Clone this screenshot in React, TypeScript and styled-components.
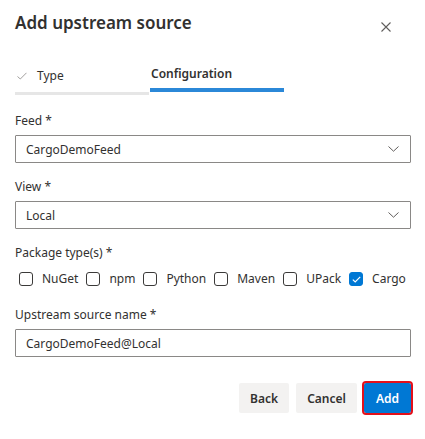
import React from "react";
import styled, { createGlobalStyle } from "styled-components";

const textColor = "#323130";
const accent = "#0078d4";

const GlobalStyle = createGlobalStyle`
  html, body {
    margin: 0;
    padding: 0;
    background: #ffffff;
  }
  body {
    font-family: "Noto Sans", "Open Sans", sans-serif;
    color: ${textColor};
  }
`;

const Dialog = styled.div`
  width: 425px;
  height: 439px;
  box-sizing: border-box;
  padding: 11px 14px 0 15px;
  display: flex;
  flex-direction: column;
`;

const Header = styled.div`
  display: flex;
  align-items: flex-start;
  justify-content: space-between;
`;

const Title = styled.h1`
  margin: 0;
  font-size: 17px;
  line-height: 24px;
  font-weight: 600;
  color: ${textColor};
`;

const CloseButton = styled.button`
  border: none;
  background: transparent;
  padding: 0;
  margin: 11px 20px 0 0;
  width: 10px;
  height: 10px;
  display: flex;
  cursor: pointer;
`;

const Stepper = styled.div`
  display: flex;
  gap: 1px;
  margin-top: 31px;
`;

const Step = styled.div<{ $active?: boolean }>`
  width: 134px;
  display: flex;
  flex-direction: column;
  padding-top: ${(p) => (p.$active ? 0 : 2)}px;
`;

const StepLabel = styled.div<{ $active?: boolean }>`
  display: flex;
  align-items: center;
  gap: 10px;
  height: 16px;
  padding-left: ${(p) => (p.$active ? 1 : 2)}px;
  font-size: 12px;
  line-height: 16px;
  font-weight: ${(p) => (p.$active ? 600 : 400)};
  color: ${textColor};
`;

const StepBar = styled.div<{ $active?: boolean }>`
  margin-top: ${(p) => (p.$active ? 6 : 8)}px;
  height: ${(p) => (p.$active ? 4 : 3)}px;
  background: ${(p) => (p.$active ? "#2b88d8" : "#e6e6e6")};
`;

const Form = styled.div`
  display: flex;
  flex-direction: column;
  margin-top: 18px;
`;

const Field = styled.div<{ $gap?: number }>`
  display: flex;
  flex-direction: column;
  margin-bottom: ${(p) => p.$gap ?? 16}px;
`;

const Label = styled.label`
  font-size: 12px;
  line-height: 16px;
  color: ${textColor};
  margin-bottom: 6px;
`;

const Box = styled.div`
  height: 28px;
  box-sizing: border-box;
  border: 1px solid #8a8886;
  border-radius: 1px;
  display: flex;
  align-items: center;
  padding: 0 11px 0 10px;
  font-size: 12px;
  color: ${textColor};
`;

const BoxText = styled.span`
  flex: 1;
`;

const CheckRow = styled.div`
  display: flex;
  align-items: center;
  gap: 8px;
  padding-left: 4px;
  margin-top: 4px;
`;

const CheckItem = styled.label`
  display: flex;
  align-items: center;
  gap: 9px;
  font-size: 12px;
  line-height: 16px;
  color: ${textColor};
`;

const CheckBox = styled.span<{ $checked?: boolean }>`
  width: 14px;
  height: 14px;
  box-sizing: border-box;
  border-radius: 3px;
  border: 1px solid ${(p) => (p.$checked ? accent : "#3b3a39")};
  background: ${(p) => (p.$checked ? accent : "#fff")};
  display: flex;
  align-items: center;
  justify-content: center;
`;

const Footer = styled.div`
  display: flex;
  justify-content: flex-end;
  gap: 7px;
  margin-top: 26px;
`;

const Button = styled.button<{ $primary?: boolean }>`
  height: 30px;
  padding: 0 ${(p) => (p.$primary ? 12 : 11)}px;
  border: none;
  border-radius: 2px;
  font-family: "Noto Sans", "Open Sans", sans-serif;
  font-size: 12px;
  font-weight: 600;
  background: ${(p) => (p.$primary ? accent : "#f3f2f1")};
  color: ${(p) => (p.$primary ? "#fff" : textColor)};
  outline: ${(p) => (p.$primary ? "2px solid #e3101a" : "none")};
  cursor: pointer;
`;

const Chevron = () => (
  <svg width="11" height="6" viewBox="0 0 11 6" fill="none">
    <path d="M0.5 0.5 L5.5 5.2 L10.5 0.5" stroke="#605e5c" strokeWidth="1" />
  </svg>
);

const packageTypes = [
  { name: "NuGet", checked: false },
  { name: "npm", checked: false },
  { name: "Python", checked: false },
  { name: "Maven", checked: false },
  { name: "UPack", checked: false },
  { name: "Cargo", checked: true },
];

export default function App() {
  return (
    <Dialog>
      <GlobalStyle />
      <Header>
        <Title>Add upstream source</Title>
        <CloseButton aria-label="Close">
          <svg width="10" height="10" viewBox="0 0 10 10">
            <path d="M0.5 0.5 L9.5 9.5 M9.5 0.5 L0.5 9.5" stroke="#605e5c" strokeWidth="1.1" />
          </svg>
        </CloseButton>
      </Header>

      <Stepper>
        <Step>
          <StepLabel>
            <svg width="10" height="8" viewBox="0 0 10 8">
              <path d="M0.5 4.5 L3.3 7 L9.5 0.8" stroke="#a19f9d" strokeWidth="1" fill="none" />
            </svg>
            Type
          </StepLabel>
          <StepBar />
        </Step>
        <Step $active>
          <StepLabel $active>Configuration</StepLabel>
          <StepBar $active />
        </Step>
      </Stepper>

      <Form>
        <Field>
          <Label>Feed *</Label>
          <Box>
            <BoxText>CargoDemoFeed</BoxText>
            <Chevron />
          </Box>
        </Field>
        <Field>
          <Label>View *</Label>
          <Box>
            <BoxText>Local</BoxText>
            <Chevron />
          </Box>
        </Field>
        <Field $gap={20}>
          <Label>Package type(s) *</Label>
          <CheckRow>
            {packageTypes.map((t) => (
              <CheckItem key={t.name}>
                <CheckBox $checked={t.checked}>
                  {t.checked && (
                    <svg width="9" height="7" viewBox="0 0 9 7">
                      <path d="M0.8 3.6 L3.2 5.9 L8.2 0.8" stroke="#fff" strokeWidth="1.2" fill="none" />
                    </svg>
                  )}
                </CheckBox>
                {t.name}
              </CheckItem>
            ))}
          </CheckRow>
        </Field>
        <Field $gap={0}>
          <Label>Upstream source name *</Label>
          <Box>
            <BoxText>CargoDemoFeed@Local</BoxText>
          </Box>
        </Field>
      </Form>

      <Footer>
        <Button>Back</Button>
        <Button>Cancel</Button>
        <Button $primary>Add</Button>
      </Footer>
    </Dialog>
  );
}
